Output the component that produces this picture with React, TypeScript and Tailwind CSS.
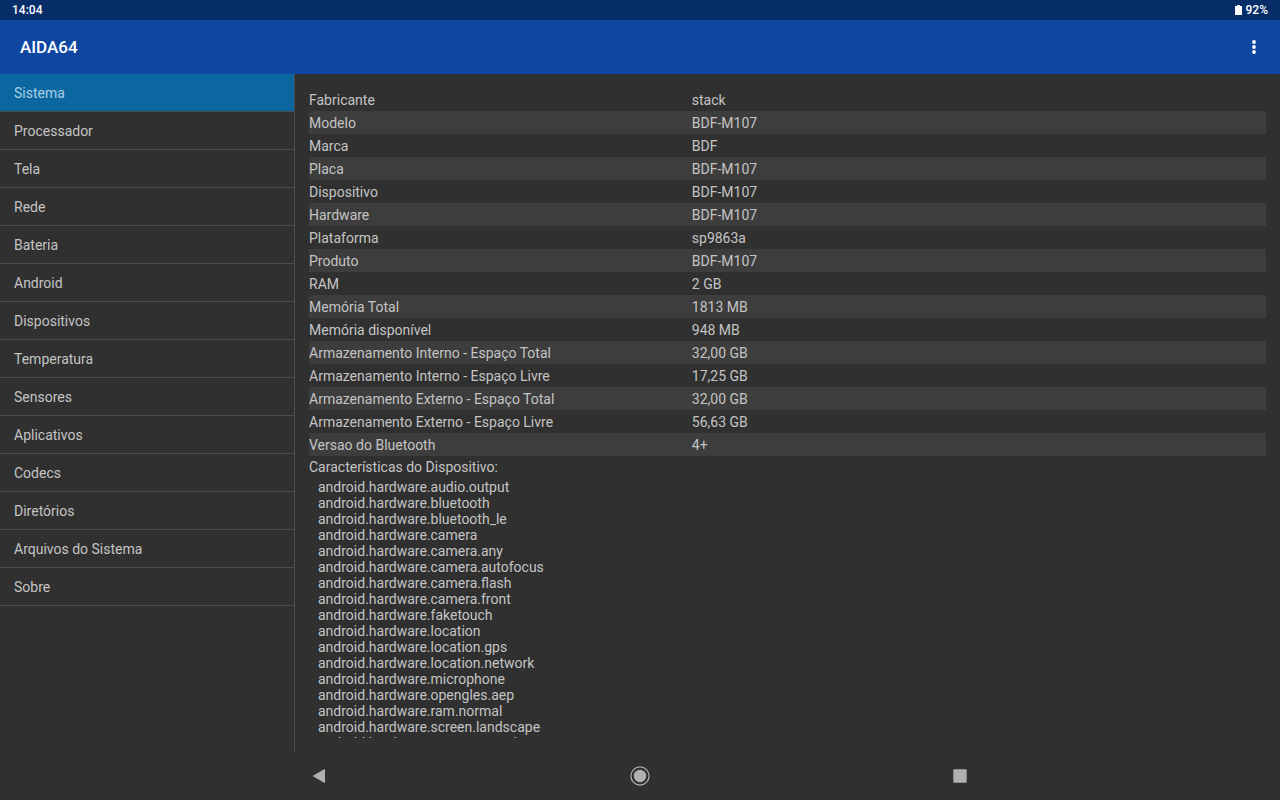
import { useState } from "react";

const sections = [
  "Sistema",
  "Processador",
  "Tela",
  "Rede",
  "Bateria",
  "Android",
  "Dispositivos",
  "Temperatura",
  "Sensores",
  "Aplicativos",
  "Codecs",
  "Diretórios",
  "Arquivos do Sistema",
  "Sobre",
];

const systemInfo = [
  { label: "Fabricante", value: "stack" },
  { label: "Modelo", value: "BDF-M107" },
  { label: "Marca", value: "BDF" },
  { label: "Placa", value: "BDF-M107" },
  { label: "Dispositivo", value: "BDF-M107" },
  { label: "Hardware", value: "BDF-M107" },
  { label: "Plataforma", value: "sp9863a" },
  { label: "Produto", value: "BDF-M107" },
  { label: "RAM", value: "2 GB" },
  { label: "Memória Total", value: "1813 MB" },
  { label: "Memória disponível", value: "948 MB" },
  { label: "Armazenamento Interno - Espaço Total", value: "32,00 GB" },
  { label: "Armazenamento Interno - Espaço Livre", value: "17,25 GB" },
  { label: "Armazenamento Externo - Espaço Total", value: "32,00 GB" },
  { label: "Armazenamento Externo - Espaço Livre", value: "56,63 GB" },
  { label: "Versao do Bluetooth", value: "4+" },
];

const features = [
  "android.hardware.audio.output",
  "android.hardware.bluetooth",
  "android.hardware.bluetooth_le",
  "android.hardware.camera",
  "android.hardware.camera.any",
  "android.hardware.camera.autofocus",
  "android.hardware.camera.flash",
  "android.hardware.camera.front",
  "android.hardware.faketouch",
  "android.hardware.location",
  "android.hardware.location.gps",
  "android.hardware.location.network",
  "android.hardware.microphone",
  "android.hardware.opengles.aep",
  "android.hardware.ram.normal",
  "android.hardware.screen.landscape",
  "android.hardware.screen.portrait",
];

function StatusBar() {
  return (
    <div className="flex h-5 shrink-0 items-center justify-between bg-[#062d68] px-3 text-xs font-medium text-white">
      <span>14:04</span>
      <span className="flex items-center gap-1">
        <svg width="7" height="10" viewBox="0 0 7 10" fill="currentColor" aria-hidden="true">
          <path d="M2 0h3v1h2v9H0V1h2z" />
        </svg>
        92%
      </span>
    </div>
  );
}

function AppBar() {
  return (
    <header className="flex h-[54px] shrink-0 items-center justify-between bg-[#0d47a1] pr-4 pl-5">
      <h1 className="text-[17px] font-medium text-white">AIDA64</h1>
      <button type="button" aria-label="Mais opções" className="flex size-5 items-center justify-center text-white">
        <svg width="4" height="14" viewBox="0 0 4 14" fill="currentColor">
          <circle cx="2" cy="2" r="1.9" />
          <circle cx="2" cy="7" r="1.9" />
          <circle cx="2" cy="12" r="1.9" />
        </svg>
      </button>
    </header>
  );
}

function NavigationBar() {
  return (
    <div className="mx-auto grid h-12 w-3/4 shrink-0 grid-cols-3 place-items-center text-[#b0b0b0]">
      <button type="button" aria-label="Voltar" className="p-2">
        <svg width="20" height="20" viewBox="0 0 20 20" fill="currentColor">
          <path d="M15 3.6v12.8q0 .8-.8.4L3.4 10.6q-.9-.6 0-1.2L14.2 3.2q.8-.4.8.4z" />
        </svg>
      </button>
      <button type="button" aria-label="Início" className="p-2">
        <svg width="20" height="20" viewBox="0 0 20 20">
          <circle cx="10" cy="10" r="9.1" fill="none" stroke="currentColor" strokeWidth="1.2" />
          <circle cx="10" cy="10" r="6.2" fill="currentColor" />
        </svg>
      </button>
      <button type="button" aria-label="Recentes" className="p-2">
        <svg width="20" height="20" viewBox="0 0 20 20" fill="currentColor">
          <rect x="3.3" y="3.3" width="13.4" height="13.4" rx="1" />
        </svg>
      </button>
    </div>
  );
}

export default function App() {
  const [active, setActive] = useState("Sistema");

  return (
    <div className="flex h-screen flex-col bg-[#303030] font-[Roboto,sans-serif] text-sm text-[#c4c4c4]">
      <StatusBar />
      <AppBar />

      <div className="flex min-h-0 flex-1">
        <nav className="w-[295px] shrink-0 overflow-hidden border-r border-[#4b4b4b]">
          {sections.map((name) => (
            <button
              key={name}
              type="button"
              onClick={() => setActive(name)}
              className={
                name === active
                  ? "flex h-[38px] w-full items-center border-b border-[#4b4b4b] bg-[#0c67a1] px-3.5 text-[#a9cfe6]"
                  : "flex h-[38px] w-full items-center border-b border-[#4b4b4b] px-3.5"
              }
            >
              {name}
            </button>
          ))}
        </nav>

        <main className="flex min-w-0 flex-1 flex-col p-3.5">
          {/* The list scrolls under the bottom padding */}
          <div className="min-h-0 flex-1 overflow-y-auto [scrollbar-width:none]">
            <table className="w-full table-fixed border-collapse">
              <tbody>
                {systemInfo.map((row) => (
                  <tr key={row.label} className="h-[23px] even:bg-[#3d3d3d]">
                    <th scope="row" className="w-2/5 p-0 text-left font-normal">
                      {row.label}
                    </th>
                    <td className="p-0">{row.value}</td>
                  </tr>
                ))}
              </tbody>
            </table>

            {/* Device features */}
            <h2 className="leading-[23px]">Características do Dispositivo:</h2>
            <ul className="pl-[9px] leading-4">
              {features.map((feature) => (
                <li key={feature}>{feature}</li>
              ))}
            </ul>
          </div>
        </main>
      </div>

      <NavigationBar />
    </div>
  );
}
